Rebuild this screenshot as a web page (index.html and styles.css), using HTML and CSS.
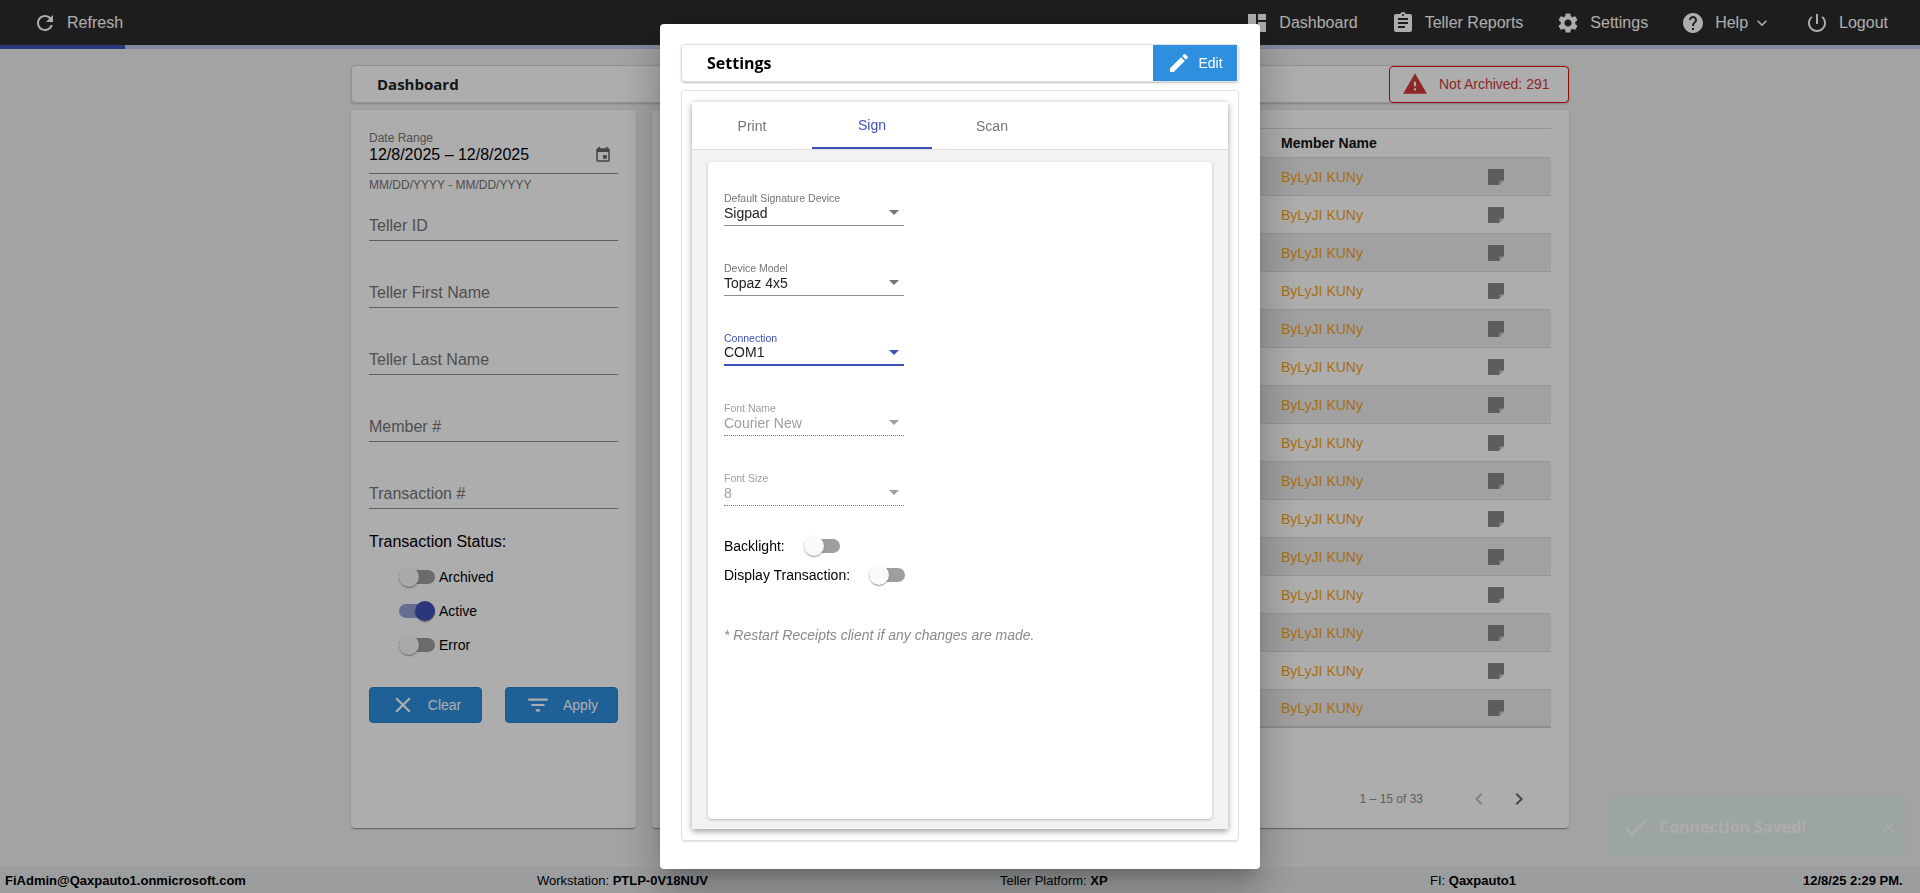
FILE: index.html
```html
<!DOCTYPE html>
<html lang="en">
  <head>
    <meta charset="UTF-8" />
    <meta name="viewport" content="width=device-width, initial-scale=1.0" />
    <title>Settings</title>
    <link rel="stylesheet" href="styles.css">
  </head>
  <body>
    <svg class="sprite" aria-hidden="true">
      <symbol id="i-note" viewBox="0 0 16 16"><path d="M1 0h14a1 1 0 0 1 1 1v10l-5 5H1a1 1 0 0 1-1-1V1a1 1 0 0 1 1-1z"/><path fill="#c8c8c8" d="M11.500 11.500H16L11.500 16z"/></symbol>
    </svg>

    <div id="page">
      <header id="topbar">
        <a class="nav-item refresh">
          <svg viewBox="0 0 24 24" class="nav-icon"><path d="M17.65 6.35C16.2 4.9 14.21 4 12 4c-4.42 0-7.99 3.58-7.99 8s3.57 8 7.99 8c3.73 0 6.84-2.55 7.73-6h-2.08c-.82 2.33-3.04 4-5.65 4-3.31 0-6-2.69-6-6s2.69-6 6-6c1.66 0 3.14.69 4.22 1.78L13 11h7V4l-2.35 2.35z"/></svg>
          Refresh
        </a>
        <nav id="nav-right">
          <a class="nav-item">
            <svg viewBox="0 0 24 24" class="nav-icon"><path d="M3 13h8V3H3v10zm0 8h8v-6H3v6zm10 0h8V11h-8v10zm0-18v6h8V3h-8z"/></svg>
            Dashboard
          </a>
          <a class="nav-item">
            <svg viewBox="0 0 24 24" class="nav-icon"><path d="M19 3h-4.180C14.400 1.840 13.300 1 12 1c-1.300 0-2.400.84-2.820 2H5c-1.100 0-2 .9-2 2v14c0 1.100.9 2 2 2h14c1.100 0 2-.9 2-2V5c0-1.100-.9-2-2-2zm-7 0c.55 0 1 .45 1 1s-.45 1-1 1-1-.45-1-1 .45-1 1-1zm2 14H7v-2h7v2zm3-4H7v-2h10v2zm0-4H7V7h10v2z"/></svg>
            Teller Reports
          </a>
          <a class="nav-item">
            <svg viewBox="0 0 24 24" class="nav-icon"><path d="M19.140 12.940c.04-.3.06-.61.06-.94 0-.32-.02-.64-.07-.94l2.030-1.580c.18-.14.23-.41.12-.61l-1.920-3.320c-.12-.22-.37-.29-.59-.22l-2.390.96c-.5-.38-1.030-.7-1.620-.94l-.36-2.540c-.04-.24-.24-.41-.48-.41h-3.840c-.24 0-.43.17-.47.41l-.36 2.540c-.59.24-1.130.57-1.620.94l-2.390-.96c-.22-.08-.47 0-.59.22L2.740 8.870c-.12.21-.08.47.12.61l2.030 1.580c-.05.3-.09.63-.09.94s.02.64.07.94l-2.030 1.580c-.18.14-.23.41-.12.61l1.920 3.320c.12.22.37.29.59.22l2.390-.96c.5.38 1.030.7 1.620.94l.36 2.540c.05.24.24.41.48.41h3.840c.24 0 .44-.17.47-.41l.36-2.540c.59-.24 1.130-.56 1.620-.94l2.390.96c.22.08.47 0 .59-.22l1.920-3.320c.12-.22.07-.47-.12-.61l-2.010-1.580zM12 15.600c-1.980 0-3.600-1.620-3.600-3.600s1.620-3.600 3.600-3.600 3.600 1.620 3.600 3.600-1.620 3.600-3.600 3.600z"/></svg>
            Settings
          </a>
          <a class="nav-item">
            <svg viewBox="0 0 24 24" class="nav-icon"><path d="M12 2C6.480 2 2 6.480 2 12s4.480 10 10 10 10-4.480 10-10S17.520 2 12 2zm1 17h-2v-2h2v2zm2.070-7.750l-.9.92C13.450 12.900 13 13.500 13 15h-2v-.5c0-1.100.45-2.100 1.170-2.830l1.240-1.260c.37-.36.59-.86.59-1.410 0-1.100-.9-2-2-2s-2 .9-2 2H8c0-2.210 1.790-4 4-4s4 1.790 4 4c0 .88-.36 1.680-.93 2.250z"/></svg>
            Help
            <svg viewBox="0 0 24 24" class="nav-chevron"><path d="M16.590 8.590L12 13.170 7.410 8.590 6 10l6 6 6-6z"/></svg>
          </a>
          <a class="nav-item">
            <svg viewBox="0 0 24 24" class="nav-icon"><path d="M13 3h-2v10h2V3zm4.830 2.170l-1.420 1.420C17.990 7.860 19 9.810 19 12c0 3.870-3.130 7-7 7s-7-3.130-7-7c0-2.190 1.010-4.140 2.580-5.420L6.170 5.170C4.230 6.820 3 9.260 3 12c0 4.970 4.030 9 9 9s9-4.030 9-9c0-2.740-1.230-5.180-3.170-6.830z"/></svg>
            Logout
          </a>
        </nav>
      </header>
      <div id="progress"><div id="progress-fill"></div></div>

      <main id="content">
        <div id="title-bar">
          <h2>Dashboard</h2>
          <div id="not-archived">
            <svg viewBox="0 0 24 24"><path d="M1 21h22L12 2 1 21zm12-3h-2v-2h2v2zm0-4h-2v-4h2v4z"/></svg>
            Not Archived: 291
          </div>
        </div>

        <div id="columns">
          <aside id="filters" class="card">
            <div class="date-field">
              <label>Date Range</label>
              <div class="date-value">
                12/8/2025 – 12/8/2025
                <svg viewBox="0 0 24 24"><path d="M17 12h-5v5h5v-5zM16 1v2H8V1H6v2H5c-1.110 0-1.990.9-1.990 2L3 19c0 1.100.89 2 2 2h14c1.100 0 2-.9 2-2V5c0-1.100-.9-2-2-2h-1V1h-2zm3 18H5V8h14v11z"/></svg>
              </div>
              <div class="hint">MM/DD/YYYY - MM/DD/YYYY</div>
            </div>
            <div class="text-fields">
              <div class="text-field">Teller ID</div>
              <div class="text-field">Teller First Name</div>
              <div class="text-field">Teller Last Name</div>
              <div class="text-field">Member #</div>
              <div class="text-field">Transaction #</div>
            </div>
            <div class="status-title">Transaction Status:</div>
            <div class="status-row"><span class="toggle"><span class="knob"></span></span>Archived</div>
            <div class="status-row"><span class="toggle on"><span class="knob"></span></span>Active</div>
            <div class="status-row"><span class="toggle"><span class="knob"></span></span>Error</div>
            <div class="filter-buttons">
              <button>
                <svg viewBox="0 0 24 24"><path d="M19 6.410L17.590 5 12 10.590 6.410 5 5 6.410 10.590 12 5 17.590 6.410 19 12 13.410 17.590 19 19 17.590 13.410 12z"/></svg>
                Clear
              </button>
              <button>
                <svg viewBox="0 0 24 24"><path d="M10 18h4v-2h-4v2zM3 6v2h18V6H3zm3 7h12v-2H6v2z"/></svg>
                Apply
              </button>
            </div>
          </aside>

          <section id="results" class="card">
            <div class="table">
              <div class="row head"><span></span><span>Member Name</span></div>
              <div class="row"><span></span><span>ByLyJI KUNy</span><svg class="note"><use href="#i-note"/></svg></div>
              <div class="row"><span></span><span>ByLyJI KUNy</span><svg class="note"><use href="#i-note"/></svg></div>
              <div class="row"><span></span><span>ByLyJI KUNy</span><svg class="note"><use href="#i-note"/></svg></div>
              <div class="row"><span></span><span>ByLyJI KUNy</span><svg class="note"><use href="#i-note"/></svg></div>
              <div class="row"><span></span><span>ByLyJI KUNy</span><svg class="note"><use href="#i-note"/></svg></div>
              <div class="row"><span></span><span>ByLyJI KUNy</span><svg class="note"><use href="#i-note"/></svg></div>
              <div class="row"><span></span><span>ByLyJI KUNy</span><svg class="note"><use href="#i-note"/></svg></div>
              <div class="row"><span></span><span>ByLyJI KUNy</span><svg class="note"><use href="#i-note"/></svg></div>
              <div class="row"><span></span><span>ByLyJI KUNy</span><svg class="note"><use href="#i-note"/></svg></div>
              <div class="row"><span></span><span>ByLyJI KUNy</span><svg class="note"><use href="#i-note"/></svg></div>
              <div class="row"><span></span><span>ByLyJI KUNy</span><svg class="note"><use href="#i-note"/></svg></div>
              <div class="row"><span></span><span>ByLyJI KUNy</span><svg class="note"><use href="#i-note"/></svg></div>
              <div class="row"><span></span><span>ByLyJI KUNy</span><svg class="note"><use href="#i-note"/></svg></div>
              <div class="row"><span></span><span>ByLyJI KUNy</span><svg class="note"><use href="#i-note"/></svg></div>
              <div class="row"><span></span><span>ByLyJI KUNy</span><svg class="note"><use href="#i-note"/></svg></div>
            </div>
            <div id="paginator">
              <span class="range">1 – 15 of 33</span>
              <svg viewBox="0 0 24 24" class="page-btn disabled"><path d="M15.410 7.410L14 6l-6 6 6 6 1.410-1.410L10.830 12z"/></svg>
              <svg viewBox="0 0 24 24" class="page-btn"><path d="M10 6L8.590 7.410 13.170 12l-4.580 4.580L10 18l6-6z"/></svg>
            </div>
          </section>
        </div>
      </main>

      <div id="toast">
        <svg viewBox="0 0 24 24" class="toast-check"><path d="M9 16.170L4.830 12l-1.420 1.410L9 19 21 7l-1.410-1.410z"/></svg>
        <span>Connection Saved!</span>
        <svg viewBox="0 0 24 24" class="toast-close"><path d="M19 6.410L17.590 5 12 10.590 6.410 5 5 6.410 10.590 12 5 17.590 6.410 19 12 13.410 17.590 19 19 17.590 13.410 12z"/></svg>
      </div>

      <footer id="statusbar">
        <b class="user">FiAdmin@Qaxpauto1.onmicrosoft.com</b>
        <span class="workstation">Workstation: <b>PTLP-0V18NUV</b></span>
        <span class="platform">Teller Platform: <b>XP</b></span>
        <span class="fi">FI: <b>Qaxpauto1</b></span>
        <b class="clock">12/8/25 2:29 PM.</b>
      </footer>
    </div>

    <div id="overlay">
      <div id="modal">
        <div id="modal-header">
          <h2>Settings</h2>
          <button id="edit">
            <svg viewBox="0 0 24 24"><path d="M3 17.250V21h3.750L17.810 9.940l-3.750-3.750L3 17.250zM20.710 7.040c.39-.39.39-1.020 0-1.410l-2.340-2.340c-.39-.39-1.020-.39-1.410 0l-1.830 1.830 3.750 3.750 1.830-1.830z"/></svg>
            Edit
          </button>
        </div>
        <div id="modal-box">
          <div id="tab-group">
            <div id="tabs">
              <div class="tab">Print</div>
              <div class="tab active">Sign</div>
              <div class="tab">Scan</div>
            </div>
            <div id="tab-body">
              <div id="sign-card">
                <div class="select">
                  <label>Default Signature Device</label>
                  <div class="select-value">Sigpad<i class="arrow"></i></div>
                </div>
                <div class="select">
                  <label>Device Model</label>
                  <div class="select-value">Topaz 4x5<i class="arrow"></i></div>
                </div>
                <div class="select focused">
                  <label>Connection</label>
                  <div class="select-value">COM1<i class="arrow"></i></div>
                </div>
                <div class="select disabled">
                  <label>Font Name</label>
                  <div class="select-value">Courier New<i class="arrow"></i></div>
                </div>
                <div class="select disabled">
                  <label>Font Size</label>
                  <div class="select-value">8<i class="arrow"></i></div>
                </div>
                <div class="switches">
                  <div class="switch-row">Backlight:<span class="toggle"><span class="knob"></span></span></div>
                  <div class="switch-row">Display Transaction:<span class="toggle"><span class="knob"></span></span></div>
                </div>
                <p class="note-text">* Restart Receipts client if any changes are made.</p>
              </div>
            </div>
          </div>
        </div>
      </div>
    </div>
  </body>
</html>
```
FILE: styles.css
```css
* {
  margin: 0;
  padding: 0;
  box-sizing: border-box;
}

:root {
  --primary: #3f51b5;
  --button: #2e8fdf;
  --toggle-off: #9e9e9e;
}

html,
body {
  height: 100%;
  overflow: hidden;
}

body {
  background-color: #f0f0f0;
  font-family: "Liberation Sans", Arial, sans-serif;
  font-size: 14px;
  color: #000;
}

.sprite {
  width: 0;
  height: 0;
  display: block;
}

#page {
  display: flex;
  flex-direction: column;
  height: 893px;
}

/* top bar */
#topbar {
  display: flex;
  justify-content: space-between;
  align-items: center;
  height: 45px;
  padding: 0 32px 0 33px;
  background-color: #2c2c2c;
  color: #fff;
  font-size: 16px;
}

#nav-right {
  display: flex;
  align-items: center;
  gap: 33px;
}

.nav-item {
  display: flex;
  align-items: center;
  gap: 10px;
}

.nav-icon {
  width: 24px;
  height: 24px;
  fill: #fff;
}

.nav-chevron {
  width: 20px;
  height: 20px;
  margin-left: -6px;
  fill: #fff;
}

#progress {
  height: 4px;
  background-color: #c5cae9;
}

#progress-fill {
  width: 125px;
  height: 4px;
  background-color: var(--primary);
}

/* page content */
#content {
  flex: 1;
  width: 1218px;
  margin: 0 auto;
  padding-top: 16px;
}

#title-bar {
  display: flex;
  justify-content: space-between;
  align-items: center;
  height: 38px;
  padding-left: 25px;
  border: 1px solid #d8d8d8;
  border-radius: 4px;
  background-color: #fff;
  box-shadow: 0 1px 2px rgba(0, 0, 0, 0.2);
}

#title-bar h2 {
  font-family: "Open Sans", sans-serif;
  font-size: 15px;
  font-weight: 700;
  color: #222;
}

#not-archived {
  display: flex;
  align-items: center;
  gap: 11px;
  width: 180px;
  height: 37px;
  margin-right: -1px;
  padding-left: 12px;
  border: 1px solid #e01010;
  border-radius: 4px;
  color: #d13a3a;
}

#not-archived svg {
  width: 26px;
  height: 26px;
  fill: #d13a3a;
}

#columns {
  display: flex;
  gap: 16px;
  height: 718px;
  margin-top: 7px;
}

.card {
  background-color: #fff;
  border-radius: 4px;
  box-shadow: 0 2px 1px -1px rgba(0, 0, 0, 0.2), 0 1px 1px 0 rgba(0, 0, 0, 0.14), 0 1px 3px 0 rgba(0, 0, 0, 0.12);
}

/* left filter card */
#filters {
  width: 285px;
  padding: 21px 18px 0;
}

.date-field {
  height: 62px;
}

.date-field label {
  display: block;
  height: 14px;
  font-size: 12px;
  line-height: 14px;
  color: #757575;
}

.date-value {
  display: flex;
  justify-content: space-between;
  align-items: center;
  height: 29px;
  padding-bottom: 8px;
  border-bottom: 1px solid #8c8c8c;
  font-size: 16px;
}

.date-value svg {
  width: 18px;
  height: 18px;
  margin-right: 6px;
  fill: #666;
}

.hint {
  margin-top: 4px;
  font-size: 12px;
  color: #757575;
}

.text-fields {
  display: grid;
  gap: 19px;
}

.text-field {
  display: flex;
  align-items: flex-end;
  height: 48px;
  padding-bottom: 5px;
  border-bottom: 1px solid #8c8c8c;
  font-size: 16px;
  color: #757575;
}

.status-title {
  margin-top: 23px;
  font-size: 16px;
  line-height: 20px;
}

.status-row {
  display: flex;
  align-items: center;
  gap: 4px;
  height: 34px;
  padding-left: 30px;
}

.status-title + .status-row {
  margin-top: 8px;
}

.toggle {
  display: flex;
  align-items: center;
  width: 36px;
  height: 14px;
  border-radius: 7px;
  background-color: var(--toggle-off);
}

.knob {
  width: 20px;
  height: 20px;
  border-radius: 50%;
  background-color: #fafafa;
  box-shadow: 0 2px 1px -1px rgba(0, 0, 0, 0.2), 0 1px 1px 0 rgba(0, 0, 0, 0.14), 0 1px 3px 0 rgba(0, 0, 0, 0.12);
}

.toggle.on {
  justify-content: flex-end;
  background-color: rgba(63, 81, 181, 0.54);
}

.toggle.on .knob {
  background-color: var(--primary);
}

.filter-buttons {
  display: flex;
  justify-content: space-between;
  margin-top: 25px;
}

.filter-buttons button {
  display: flex;
  justify-content: center;
  align-items: center;
  gap: 12px;
  width: 113px;
  height: 36px;
  border: 1px solid #2a80c8;
  border-radius: 4px;
  background-color: var(--button);
  color: #fff;
  font-family: inherit;
  font-size: 14px;
}

.filter-buttons svg {
  width: 26px;
  height: 26px;
  fill: #fff;
}

/* results table */
#results {
  display: flex;
  flex: 1;
  flex-direction: column;
  padding: 18px 18px 1px;
}

.row {
  display: grid;
  grid-template-columns: 611px 207px 1fr;
  align-items: center;
  height: 38px;
  border-bottom: 1px solid #dcdcdc;
  color: #f7a41d;
}

.row:nth-child(even) {
  background-color: #ededed;
}

.row:last-child {
  border-bottom: 2px solid #d0d0d0;
}

.row.head {
  height: 30px;
  border-top: 1px solid #dcdcdc;
  background: none;
  color: #111;
  font-weight: 700;
}

.note {
  width: 16px;
  height: 16px;
  fill: #8a8a8a;
}

#paginator {
  display: flex;
  justify-content: flex-end;
  align-items: center;
  height: 56px;
  margin-top: auto;
  padding-right: 12px;
  font-size: 12px;
  color: #8a8a8a;
}

.range {
  margin-right: 36px;
}

.page-btn {
  width: 24px;
  height: 24px;
  margin: 0 8px;
  fill: #666;
}

.page-btn.disabled {
  fill: #c0c0c0;
}

#toast {
  position: absolute;
  left: 1608px;
  top: 797px;
  display: flex;
  align-items: center;
  width: 300px;
  height: 60px;
  padding: 0 10px 0 13px;
  background-color: #e8f3ec;
  color: #fff;
  font-family: "Open Sans", sans-serif;
  font-size: 16px;
  font-weight: 700;
}

#toast span {
  flex: 1;
  margin-left: 8px;
}

.toast-check {
  width: 30px;
  height: 30px;
  fill: #fff;
}

.toast-close {
  width: 18px;
  height: 18px;
  fill: #fff;
}

/* status bar */
#statusbar {
  display: grid;
  grid-template-columns: 532px 463px 430px 373px 1fr;
  align-items: center;
  height: 26px;
  padding-left: 5px;
  background-color: #e6e8e9;
  font-size: 13px;
}

/* dialog */
#overlay {
  position: fixed;
  inset: 0;
  display: flex;
  justify-content: center;
  align-items: center;
  background-color: rgba(0, 0, 0, 0.32);
}

#modal {
  display: flex;
  flex-direction: column;
  gap: 8px;
  width: 600px;
  height: 845px;
  padding: 20px 21px 28px;
  border-radius: 4px;
  background-color: #fff;
  box-shadow: 0 11px 15px -7px rgba(0, 0, 0, 0.2), 0 24px 38px 3px rgba(0, 0, 0, 0.14), 0 9px 46px 8px rgba(0, 0, 0, 0.12);
}

#modal-header {
  display: flex;
  justify-content: space-between;
  align-items: center;
  height: 38px;
  padding: 0 1px 0 25px;
  border: 1px solid #e0e0e0;
  border-radius: 4px;
  box-shadow: 0 1px 2px rgba(0, 0, 0, 0.25);
}

#modal-header h2 {
  font-family: "Open Sans", sans-serif;
  font-size: 16px;
  font-weight: 700;
}

#edit {
  display: flex;
  justify-content: center;
  align-items: center;
  gap: 7px;
  width: 84px;
  height: 36px;
  border: none;
  background-color: var(--button);
  color: #fff;
  font-family: inherit;
  font-size: 14px;
}

#edit svg {
  width: 24px;
  height: 24px;
  fill: #fff;
}

#modal-box {
  flex: 1;
  padding: 11px 10px;
  border: 1px solid #e0e0e0;
  border-radius: 4px;
  box-shadow: 0 1px 1px rgba(0, 0, 0, 0.12);
}

#tab-group {
  display: flex;
  flex-direction: column;
  height: 100%;
  box-shadow: 0 3px 6px rgba(0, 0, 0, 0.3), 0 0 6px rgba(0, 0, 0, 0.12);
}

#tabs {
  display: flex;
  height: 48px;
  padding-left: 0;
  border-bottom: 1px solid #e0e0e0;
}

.tab {
  display: flex;
  justify-content: center;
  align-items: center;
  width: 120px;
  color: #757575;
}

.tab.active {
  border-bottom: 2px solid var(--primary);
  color: var(--primary);
}

#tab-body {
  flex: 1;
  padding: 12px 16px 10px;
  background-color: #f2f2f2;
}

#sign-card {
  height: 100%;
  padding: 30px 16px 0;
  border-radius: 4px;
  background-color: #fff;
  box-shadow: 0 1px 3px rgba(0, 0, 0, 0.25);
}

.select {
  width: 180px;
  height: 34px;
  margin-bottom: 36px;
}

.select label {
  display: block;
  height: 13px;
  font-size: 10.5px;
  line-height: 12px;
  color: #757575;
}

.select-value {
  display: flex;
  justify-content: space-between;
  align-items: center;
  height: 21px;
  padding: 0 5px 5px 0;
  border-bottom: 1px solid #8c8c8c;
  color: #222;
}

.arrow {
  width: 0;
  height: 0;
  border-top: 5px solid #757575;
  border-left: 5px solid transparent;
  border-right: 5px solid transparent;
}

.select.focused label {
  color: var(--primary);
}

.select.focused .select-value {
  border-bottom: 2px solid var(--primary);
}

.select.focused .arrow {
  border-top-color: var(--primary);
}

.select.disabled label,
.select.disabled .select-value {
  color: #a0a0a0;
}

.select.disabled .select-value {
  border-bottom: 1px dotted #777;
}

.select.disabled .arrow {
  border-top-color: #a0a0a0;
}

.switches {
  margin-top: -11px;
}

.switch-row {
  display: flex;
  align-items: center;
  gap: 19px;
  height: 29px;
}

.note-text {
  margin-top: 36px;
  line-height: 20px;
  font-style: italic;
  color: #8a8a8a;
}
```
